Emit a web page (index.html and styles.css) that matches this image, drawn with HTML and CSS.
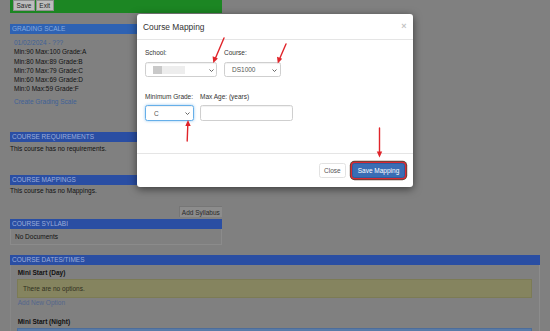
FILE: index.html
```html
<!DOCTYPE html>
<html>
<head>
<meta charset="utf-8">
<link rel="stylesheet" href="styles.css">
</head>
<body>
<div class="page">
  <div class="col">
    <div class="toolbar">
      <button class="btn">Save</button>
      <button class="btn">Exit</button>
    </div>

    <section class="sect grading">
      <div class="head head-grading">Grading Scale</div>
      <div class="gbody">
        <div class="link">01/02/2024 - ???</div>
        <div>Min:90 Max:100 Grade:A</div>
        <div>Min:80 Max:89 Grade:B</div>
        <div>Min:70 Max:79 Grade:C</div>
        <div>Min:60 Max:69 Grade:D</div>
        <div>Min:0 Max:59 Grade:F</div>
        <div class="link create">Create Grading Scale</div>
      </div>
    </section>

    <section class="sect req">
      <div class="head">Course Requirements</div>
      <div class="note note-req">This course has no requirements.</div>
    </section>

    <section class="sect maps">
      <div class="head">Course Mappings</div>
      <div class="note note-maps">This course has no Mappings.</div>
    </section>

    <div class="addrow"><button class="btn-add">Add Syllabus</button></div>

    <section class="sect syll">
      <div class="head">Course Syllabi</div>
      <div class="docs">No Documents</div>
    </section>
  </div>

  <section class="sect dates">
    <div class="head">Course Dates/Times</div>
    <div class="dbody">
      <div class="subtitle">Mini Start (Day)</div>
      <div class="warnbox">There are no options.</div>
      <div class="link addopt">Add New Option</div>
      <div class="subtitle night">Mini Start (Night)</div>
      <div class="infobox"></div>
    </div>
  </section>
</div>

<div class="modal">
  <div class="mhead">
    <div class="mtitle">Course Mapping</div>
    <div class="mclose">&times;</div>
  </div>
  <div class="mbody">
    <div class="frow">
      <div class="fgroup g-school">
        <div class="flabel">School:</div>
        <div class="select">
          <span class="redact dark"></span><span class="redact light"></span>
          <svg class="chev" viewBox="0 0 5 3" width="5" height="3"><path d="M0.5 0.5 L2.5 2.5 L4.5 0.5" fill="none" stroke="#555" stroke-width="0.9"/></svg>
        </div>
      </div>
      <div class="fgroup g-course">
        <div class="flabel">Course:</div>
        <div class="select"><span class="val">DS1000</span>
          <svg class="chev" viewBox="0 0 5 3" width="5" height="3"><path d="M0.5 0.5 L2.5 2.5 L4.5 0.5" fill="none" stroke="#555" stroke-width="0.9"/></svg>
        </div>
      </div>
    </div>
    <div class="frow row2">
      <div class="fgroup g-grade">
        <div class="flabel">Minimum Grade:</div>
        <div class="select focus"><span class="val">C</span>
          <svg class="chev" viewBox="0 0 5 3" width="5" height="3"><path d="M0.5 0.5 L2.5 2.5 L4.5 0.5" fill="none" stroke="#555" stroke-width="0.9"/></svg>
        </div>
      </div>
      <div class="fgroup g-age">
        <div class="flabel">Max Age: (years)</div>
        <div class="input"></div>
      </div>
    </div>
  </div>
  <div class="mfoot">
    <button class="mbtn close">Close</button>
    <button class="mbtn primary">Save Mapping</button>
  </div>
</div>

<svg class="arrows" width="550" height="331" viewBox="0 0 550 331">
  <g stroke="#e0242a" stroke-width="1.4" fill="none" stroke-linecap="round">
    <line x1="224" y1="38" x2="215.5" y2="58"/>
    <line x1="286" y1="44" x2="279.5" y2="59"/>
    <line x1="187.2" y1="141" x2="187.8" y2="125"/>
    <line x1="379.5" y1="128" x2="379.5" y2="152"/>
  </g>
  <g fill="#e0242a">
    <polygon points="213.3,63 212.6,56.2 217.9,58.4"/>
    <polygon points="277.8,63.5 277,56.8 282.2,58.8"/>
    <polygon points="188,120 185.3,126 190.7,126"/>
    <polygon points="379.5,157.5 376.8,151.5 382.2,151.5"/>
  </g>
</svg>
</body>
</html>
```

FILE: styles.css
```css
* { box-sizing: border-box; margin: 0; padding: 0; }
html, body { width: 550px; height: 331px; overflow: hidden; }
body {
  background: #808080;
  font-family: "Liberation Sans", Arial, sans-serif;
  font-size: 6.5px;
  color: #111;
  position: relative;
}
.page { padding-left: 10px; height: 331px; overflow: hidden; }
.col { width: 212px; }

.toolbar {
  height: 13px;
  background: #1c8623;
  display: flex;
  gap: 1px;
  padding-left: 3px;
  align-items: flex-start;
}
.btn {
  font: inherit;
  height: 11px;
  line-height: 9px;
  background: #bcbcbc;
  border: 1px solid #8e8e8e;
  color: #1e1e1e;
  padding: 0 2.5px;
}

.head {
  height: 10px;
  line-height: 10px;
  padding-left: 2px;
  text-transform: uppercase;
  color: #9cadda;
  background: #2a4ea3;
  white-space: nowrap;
}
.head-grading { background: #2e62b3; color: #86aadf; }

.grading { margin-top: 11px; }
.gbody { padding: 4px 0 0 4px; line-height: 9.3px; }
.link { color: #3f6198; }
.create { margin-top: 3.6px; }

.req { margin-top: 25.4px; }
.note { line-height: 9px; }
.note-req { padding-top: 1.5px; }
.maps { margin-top: 22.9px; }
.note-maps { padding-top: 0.5px; }

.addrow { display: flex; justify-content: flex-end; margin-top: 11.5px; }
.btn-add {
  font: inherit;
  height: 10.6px;
  line-height: 9px;
  padding: 0 2.2px;
  background: #8c8c8c;
  color: #2a2a2a;
  border: 1px solid #767676;
  border-right: none;
  border-bottom: none;
}

.syll { margin-top: 2px; }
.docs {
  line-height: 9px;
  padding: 2.9px 4px 3px;
  border: 1px solid #8b8b8b;
  border-top: none;
}

.dates { margin-top: 10.5px; width: 530px; }
.dbody {
  padding: 2.2px 7px 0 6px;
  border-left: 1px solid #878787;
  border-right: 1px solid #8c8c8c;
  height: 66px;
  overflow: hidden;
}
.subtitle { font-weight: bold; line-height: 9px; padding-left: 0.7px; }
.warnbox {
  margin-top: 2.1px;
  height: 19.4px;
  line-height: 17.4px;
  padding-left: 5px;
  background: #85845f;
  border: 1px solid #7c7b55;
  color: #2f2f1e;
}
.addopt { line-height: 9px; padding-left: 0.7px; color: #53668c; }
.night { margin-top: 9.7px; }
.infobox {
  margin-top: 2.2px;
  height: 20px;
  background: #587ba8;
  border: 1px solid #4c6d9b;
}

/* modal */
.modal {
  position: absolute;
  left: 137px;
  top: 14px;
  width: 276px;
  background: #fff;
  border-radius: 3px;
  box-shadow: 0 2px 8px rgba(0,0,0,0.55);
  color: #333;
}
.mhead {
  display: flex;
  justify-content: space-between;
  align-items: center;
  padding: 7.5px 6.5px 7.5px 6px;
  border-bottom: 1px solid #e5e5e5;
}
.mtitle { font-size: 8.4px; line-height: 10px; color: #333; }
.mclose { font-size: 9px; line-height: 10px; font-weight: bold; color: #c4c4c4; margin-top: -2px; }

.mbody { padding: 9px 8px 32px; }
.frow { display: flex; gap: 7px; }
.row2 { margin-top: 16px; gap: 6px; }
.flabel { line-height: 8px; margin-bottom: 5px; color: #333; white-space: nowrap; }
.row2 .flabel { margin-bottom: 4px; }

.select, .input {
  position: relative;
  height: 15px;
  border: 1px solid #cfcfcf;
  border-radius: 2.5px;
  background: #fff;
  box-shadow: inset 0 1px 1px rgba(0,0,0,0.06);
  display: flex;
  align-items: center;
  padding-left: 7px;
  color: #555;
}
.row2 .select, .row2 .input { height: 16px; }
.g-school .select { width: 72px; }
.g-course .select { width: 57px; }
.g-grade .select { width: 49px; padding-left: 8px; }
.g-age .input { width: 93px; }
.select.focus {
  border-color: #66afe9;
  box-shadow: inset 0 1px 1px rgba(0,0,0,0.06), 0 0 3px rgba(102,175,233,0.7);
}
.chev { position: absolute; right: 2.5px; top: 5.5px; }
.g-course .chev { right: 3px; }
.g-grade .chev { right: 3.5px; top: 6px; }
.redact { display: inline-block; height: 8px; }
.redact.dark { width: 9px; background: #c9c9c9; }
.redact.light { width: 23px; background: #ededed; }

.mfoot {
  display: flex;
  justify-content: flex-end;
  gap: 6.5px;
  padding: 9px 8px 9px;
  border-top: 1px solid #e5e5e5;
}
.mbtn {
  font: inherit;
  height: 15px;
  line-height: 13px;
  border-radius: 2.5px;
  padding: 0 4px;
}
.mbtn.close {
  width: 26.5px;
  background: #fff;
  border: 1px solid #e2e2e2;
  color: #555;
}
.mbtn.primary {
  width: 53px;
  height: 14.5px;
  background: #3a6db5;
  border: 1px solid #2e5e9f;
  color: #fff;
  box-shadow: 0 0 0 1.3px #d92a35, 0 0 0 2.2px #5d4536;
}

.arrows {
  position: absolute;
  left: 0;
  top: 0;
  pointer-events: none;
}
```
